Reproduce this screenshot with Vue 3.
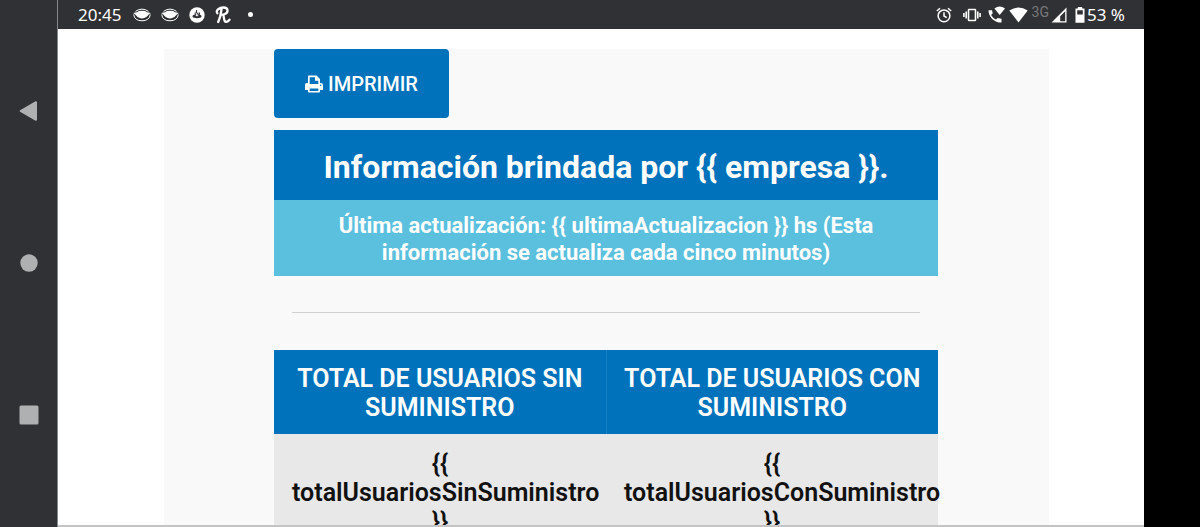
<script setup>
const columns = [
  { title: 'TOTAL DE USUARIOS SIN SUMINISTRO', value: '{{ totalUsuariosSinSuministro }}' },
  { title: 'TOTAL DE USUARIOS CON SUMINISTRO', value: '{{ totalUsuariosConSuministro }}' },
]

function printPage() {
  window.print()
}
</script>

<template>
  <div class="device">
    <nav class="nav-bar" aria-label="Navegación">
      <button type="button" class="nav-button" aria-label="Atrás">
        <svg width="20" height="22" viewBox="0 0 20 22"><path d="M1.6 11 17 2.200V19.800Z" fill="#afb0b2" stroke="#afb0b2" stroke-width="2" stroke-linejoin="round" /></svg>
      </button>
      <button type="button" class="nav-button" aria-label="Inicio">
        <svg width="18" height="18" viewBox="0 0 18 18"><circle cx="9" cy="9" r="8.700" fill="#afb0b2" /></svg>
      </button>
      <button type="button" class="nav-button" aria-label="Recientes">
        <svg width="20" height="20" viewBox="0 0 20 20"><rect x="0.500" y="0.500" width="19" height="19" rx="1.500" fill="#afb0b2" /></svg>
      </button>
    </nav>

    <div class="screen">
      <header class="status">
        <div class="status-left">
          <span>20:45</span>
          <svg v-for="n in 2" :key="n" width="18" height="14" viewBox="0 0 18 14">
            <path d="M0.200 5 4 4.200Q5.500 2.800 9 2.800T14 4.200L17.800 5Q15.200 6.500 13.700 8.800Q9 12 4.300 8.800Q2.800 6.500 0.200 5Z" fill="#fff" />
            <path d="M2.500 3.400Q9-1.200 15.500 3.400M.7 6.500Q1.500 12.800 9 12.800T17.300 6.500" fill="none" stroke="#fff" stroke-width="1" />
          </svg>
          <svg width="16" height="16" viewBox="0 0 16 16">
            <circle cx="8" cy="8" r="7.700" fill="#fff" />
            <path d="M3.400 9.500Q3.500 8 5.700 7.500L8 9.500 10.600 7.500Q12.600 8.200 12.600 9.500C12.300 11.800 3.700 11.800 3.400 9.500Z" fill="#303134" />
            <path d="M7.800 3Q6.600 4.800 8.200 6.300T9 8.600M6.300 5.500Q5.800 7 7 8M9.800 5.500Q11 6.700 10.200 8" fill="none" stroke="#303134" stroke-width="1.100" />
          </svg>
          <svg width="16" height="18" viewBox="0 0 16 18">
            <path d="M6.500 3.500C6 8 4.800 12.500 3.200 16M2.300 7.200C.5 4.500 4 1.500 8.500 1.500C13.500 1.500 13.800 6.500 9.500 8.200C8.200 8.800 7 8.700 6.400 8.700M8 8.700C9.500 10 8.200 15.700 11 15.900C12.500 16 13.500 15 14.500 13.700" fill="none" stroke="#fff" stroke-width="2.300" stroke-linecap="round" stroke-linejoin="round" />
          </svg>
          <i class="dot"></i>
        </div>
        <div class="status-right">
          <svg class="alarm" width="16" height="16" viewBox="0 0 16 16" fill="none" stroke="#fff" stroke-width="1.500">
            <circle cx="8" cy="8.800" r="5.900" /><path d="M8 5.300V9l2.700 1.700M.8 4 4 1.200M15.200 4 12 1.200" />
          </svg>
          <svg class="vibrate" width="18" height="14" viewBox="0 0 18 14" fill="none" stroke="#fff" stroke-width="1.600">
            <rect x="5.500" y="1.500" width="7" height="11" rx=".6" /><path d="M.9 5v4M3.200 3.500v7M14.800 3.500v7M17.100 5v4" />
          </svg>
          <svg class="call" width="17" height="17" viewBox="0 0 17 17" fill="#fff">
            <path d="M.5 4.300H4L4.700 7.300 3.100 8.900Q4.800 12 8 13.600L9.700 12 13.500 12.700V16.500Q8 16.500 4.200 12.900Q.5 9 .5 4.300Z" />
            <path d="M6.400 2.600Q11.700-1.800 17 2.600L11.700 9Z" />
          </svg>
          <svg width="19" height="16" viewBox="0 0 19 16"><path d="M.3 3.600Q9.500-2.800 18.700 3.600L9.500 15.500Z" fill="#fff" /></svg>
          <span class="network">3G</span>
          <svg class="signal" width="16" height="16" viewBox="0 0 16 16"><path fill-rule="evenodd" d="M.5 15.500 15.500.5V15.500ZM9.200 14.200H14.200V4.200L9.200 9.200Z" fill="#fff" /></svg>
          <svg class="battery" width="10" height="16" viewBox="0 0 10 16"><path fill-rule="evenodd" d="M2.800 0H7.200V1.500H9.500V15.700H.5V1.500H2.800ZM2.200 3.200V7.600H7.800V3.200Z" fill="#fff" /></svg>
          <span>53 %</span>
        </div>
      </header>

      <main class="page">
        <div class="panel">
          <button type="button" class="print" @click="printPage">
            <svg width="18" height="18" viewBox="0 0 18 18">
              <path fill-rule="evenodd" d="M3 8V1.500Q3 .5 4 .5H11.500L15 4V8H16Q18 8 18 10V15H15V16.500Q15 17.500 14 17.500H4Q3 17.500 3 16.500V15H0V10Q0 8 2 8ZM4.700 2.200V9H13.300V5.700H10V2.200ZM4.700 13.500V15.900H13.300V13.500ZM15 9.800V11H16.300V9.800Z" fill="#fff" />
            </svg>
            <span>IMPRIMIR</span>
          </button>

          <h1 class="title" v-pre>Información brindada por {{ empresa }}.</h1>
          <p class="updated" v-pre>Última actualización: {{ ultimaActualizacion }} hs (Esta información se actualiza cada cinco minutos)</p>
          <hr class="rule" />

          <table class="totals">
            <thead>
              <tr><th v-for="c in columns" :key="c.title" scope="col">{{ c.title }}</th></tr>
            </thead>
            <tbody>
              <tr><td v-for="c in columns" :key="c.title">{{ c.value }}</td></tr>
            </tbody>
          </table>
        </div>
      </main>
    </div>
  </div>
</template>

<style>
body {
  margin: 0;
  background: #000;
}
</style>

<style scoped>
.device {
  display: flex;
  height: 100vh;
  padding-right: 56px;
  overflow: hidden;
  background: #000;
  font-family: Roboto, "Liberation Sans", sans-serif;
  box-sizing: border-box;
}
.nav-bar {
  flex: none;
  width: 57px;
  padding-bottom: 2px;
  display: flex;
  flex-direction: column;
  justify-content: center;
  background: #303134;
  border-right: 1px solid #85878a;
}
.nav-button {
  height: 152px;
  padding: 0;
  border: 0;
  background: none;
  display: flex;
  align-items: center;
  justify-content: center;
}
.screen {
  flex: 1;
  min-width: 0;
  display: flex;
  flex-direction: column;
  background: #fff;
  border-bottom: 2px solid #c4c4c4;
}
.status {
  flex: none;
  height: 29px;
  padding: 0 19px 0 20px;
  display: flex;
  align-items: center;
  justify-content: space-between;
  background: #303134;
  color: #fff;
  font: 17px/24px "Noto Sans", sans-serif;
}
.status-left,
.status-right {
  display: flex;
  align-items: center;
}
.status-left {
  gap: 10px;
}
.status-left > span {
  margin-right: 2px;
}
.dot {
  width: 5px;
  height: 5px;
  margin-left: 7px;
  border-radius: 50%;
  background: #fff;
}
.alarm {
  margin-right: 11px;
}
.vibrate {
  margin-right: 7px;
}
.call {
  margin-right: 4px;
}
.network {
  margin: 0 2px 6px 4px;
  color: #77787b;
  font: 14px/16px Roboto, sans-serif;
}
.signal {
  margin-right: 8px;
}
.battery {
  margin-right: 2px;
}
.page {
  flex: 1;
  min-height: 0;
  overflow: hidden;
  padding: 20px 95px 0 106px;
}
.panel {
  min-height: 100%;
  padding: 0 111px 0 110px;
  background: #f9f9f9;
}
.print {
  display: flex;
  align-items: center;
  justify-content: center;
  gap: 5px;
  width: 175px;
  height: 69px;
  padding: 0;
  border: 0;
  border-radius: 4px;
  background: #0072bc;
  color: #fff;
  font: 500 20px/24px Roboto, sans-serif;
}
.title {
  margin: 12px 0 0;
  padding: 18px 18px 14px;
  background: #0072bc;
  color: #fff;
  font-size: 32px;
  line-height: 38px;
  font-weight: 700;
  text-align: center;
}
.updated {
  margin: 0;
  padding: 12px 18px 10px;
  background: #5bc0de;
  color: #fff;
  font-size: 22px;
  line-height: 27px;
  font-weight: 700;
  text-align: center;
}
.rule {
  margin: 36px 18px 37px;
  border: 0;
  border-top: 1px solid #d0d0d0;
}
.totals {
  width: 100%;
  table-layout: fixed;
  border-collapse: collapse;
  font-size: 25px;
  line-height: 29px;
  text-align: center;
}
.totals th {
  padding: 14px 16px 12px;
  background: #0072bc;
  color: #fff;
  font-weight: 600;
}
.totals th + th {
  border-left: 1px solid #1a80c3;
}
.totals td {
  padding: 15px 18px;
  background: #e8e8e8;
  color: #111;
  font-weight: 600;
}
</style>
